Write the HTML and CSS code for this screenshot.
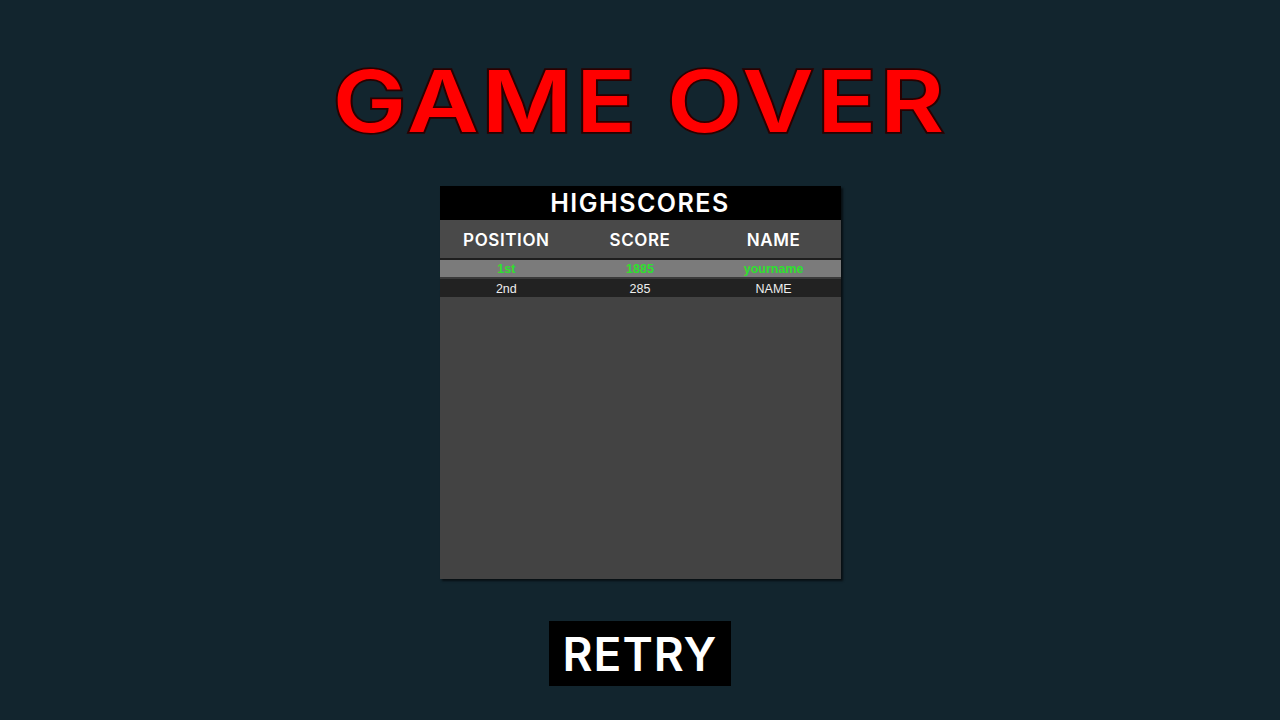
FILE: index.html
```html
<!DOCTYPE html>
<html>
<head>
<meta charset="utf-8">
<link rel="stylesheet" href="styles.css">
</head>
<body>
<div class="screen">
  <h1 class="title">GAME OVER</h1>
  <div class="panel">
    <div class="panel-title">HIGHSCORES</div>
    <div class="head">
      <span>POSITION</span><span>SCORE</span><span>NAME</span>
    </div>
    <div class="row row-hi">
      <span>1st</span><span>1885</span><span>yourname</span>
    </div>
    <div class="row row-dark">
      <span>2nd</span><span>285</span><span>NAME</span>
    </div>
  </div>
  <div class="retry">RETRY</div>
</div>
</body>
</html>
```
FILE: styles.css
```css
html, body {
  margin: 0;
  padding: 0;
  background: #12252e;
}
.screen {
  width: 1280px;
  height: 720px;
  display: flex;
  flex-direction: column;
  align-items: center;
  font-family: "Liberation Sans", Arial, sans-serif;
}
.title {
  margin: 58px 0 0 0;
  height: 90px;
  line-height: 88px;
  font-family: Inter, "DejaVu Sans", sans-serif;
  font-size: 85px;
  font-weight: 600;
  letter-spacing: 3px;
  color: #ff0000;
  -webkit-text-stroke: 3.5px #2a0000;
  paint-order: stroke fill;
  white-space: nowrap;
  transform: scaleX(1.155);
}
.panel {
  margin-top: 38px;
  width: 401px;
  height: 393px;
  background: #434343;
  box-shadow: 2px 2px 2px rgba(0,0,0,0.6);
  display: flex;
  flex-direction: column;
}
.panel-title {
  height: 34px;
  background: #000;
  color: #fff;
  font-family: Inter, sans-serif;
  font-weight: 600;
  font-size: 25px;
  letter-spacing: 1.5px;
  line-height: 35px;
  text-align: center;
}
.head {
  height: 40px;
  padding-top: 2px;
  box-sizing: border-box;
  background: #494949;
  border-bottom: 2px solid #1e1e1e;
  display: grid;
  grid-template-columns: 1fr 1fr 1fr;
  align-items: center;
  color: #fff;
  font-family: Inter, sans-serif;
  font-weight: 600;
  font-size: 17px;
  letter-spacing: 0.6px;
  text-align: center;
}
.row {
  display: grid;
  grid-template-columns: 1fr 1fr 1fr;
  align-items: center;
  text-align: center;
  font-size: 12.5px;
}
.row-hi {
  height: 17px;
  background: #7b7b7b;
  color: #2ee02e;
  font-weight: bold;
  border-bottom: 2px solid #3a3a3a;
}
.row-dark {
  height: 18px;
  padding-top: 1px;
  box-sizing: border-box;
  background: #222222;
  color: #eeeeee;
}
.retry {
  margin-top: 42px;
  width: 182px;
  height: 65px;
  background: #000;
  color: #fff;
  font-family: Inter, sans-serif;
  font-weight: 600;
  font-size: 46px;
  letter-spacing: 1px;
  line-height: 66px;
  text-align: center;
}
```
